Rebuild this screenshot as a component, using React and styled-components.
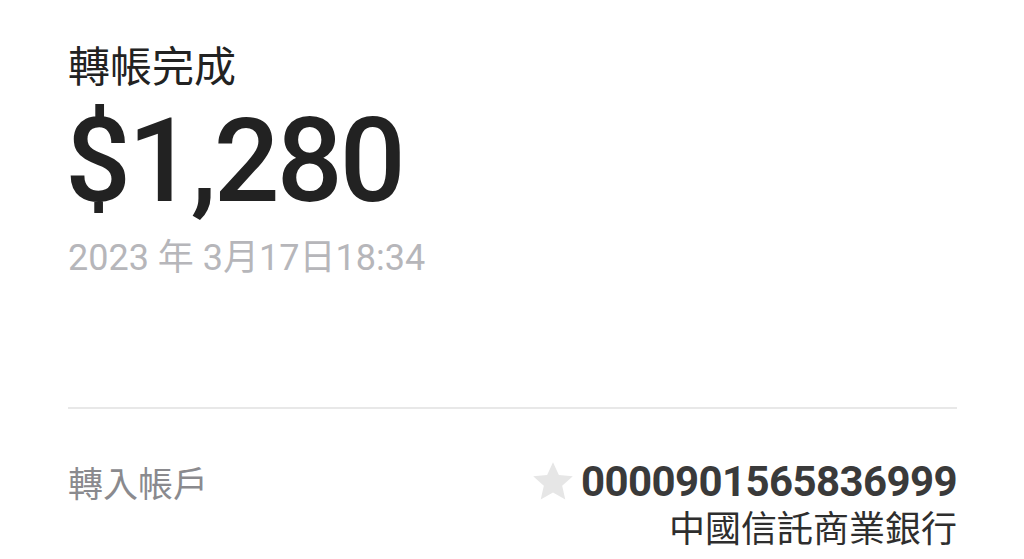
import React from 'react';
import styled, { createGlobalStyle } from 'styled-components';

const GlobalStyle = createGlobalStyle`
  html, body {
    margin: 0;
    padding: 0;
    background: #ffffff;
  }

  body {
    font-family: Roboto, 'Noto Sans CJK TC', sans-serif;
    -webkit-font-smoothing: antialiased;
  }
`;

const StyledPage = styled.div`
  width: 1024px;
  height: 559px;
  overflow: hidden;
  box-sizing: border-box;
  padding: 36px 67px 0 68px;
  display: flex;
  flex-direction: column;
`;

const StyledTitle = styled.h1`
  margin: 0;
  font-family: 'Noto Sans CJK TC', sans-serif;
  font-weight: 400;
  font-size: 42px;
  line-height: 56px;
  color: #222222;
`;

const StyledAmount = styled.div`
  margin: 7px 0 0 -3px;
  font-family: Roboto, sans-serif;
  font-weight: 500;
  font-size: 116px;
  line-height: 124px;
  color: #222222;
  letter-spacing: -3px;
`;

const StyledDate = styled.p`
  margin: 11px 0 0;
  font-size: 36px;
  line-height: 48px;
  color: #b6b6ba;
`;

const StyledDivider = styled.hr`
  margin: 125px 0 0;
  border: 0;
  height: 2px;
  background: #e8e8e8;
`;

const StyledRow = styled.div`
  margin-top: 51px;
  display: flex;
  justify-content: space-between;
  align-items: flex-start;
`;

const StyledLabel = styled.span`
  font-family: 'Noto Sans CJK TC', sans-serif;
  font-size: 35px;
  line-height: 44px;
  color: #8a8a8e;
`;

const StyledAccount = styled.div`
  display: flex;
  flex-direction: column;
  align-items: flex-end;
`;

const StyledNumberLine = styled.div`
  display: flex;
  align-items: center;
  gap: 6px;
`;

const StyledNumber = styled.span`
  font-family: Roboto, sans-serif;
  font-weight: 700;
  font-size: 42px;
  line-height: 44px;
  letter-spacing: -0.6px;
  color: #3a3a3a;
`;

const StyledBank = styled.span`
  font-family: 'Noto Sans CJK TC', sans-serif;
  font-size: 36px;
  line-height: 44px;
  color: #2e2e2e;
`;

const Star = () => (
  <svg width="44" height="44" viewBox="0 0 24 24" aria-hidden="true">
    <path
      d="M12 1.2l3.2 7 7.6.7-5.8 5.1 1.7 7.6L12 17.7l-6.7 3.9 1.7-7.6-5.8-5.1 7.6-.7z"
      fill="#e6e6e6"
    />
  </svg>
);

const App = () => (
  <StyledPage>
    <GlobalStyle />
    <StyledTitle>轉帳完成</StyledTitle>
    <StyledAmount>$1,280</StyledAmount>
    <StyledDate>2023 年 3月17日18:34</StyledDate>
    <StyledDivider />
    <StyledRow>
      <StyledLabel>轉入帳戶</StyledLabel>
      <StyledAccount>
        <StyledNumberLine>
          <Star />
          <StyledNumber>0000901565836999</StyledNumber>
        </StyledNumberLine>
        <StyledBank>中國信託商業銀行</StyledBank>
      </StyledAccount>
    </StyledRow>
  </StyledPage>
);

export default App;
